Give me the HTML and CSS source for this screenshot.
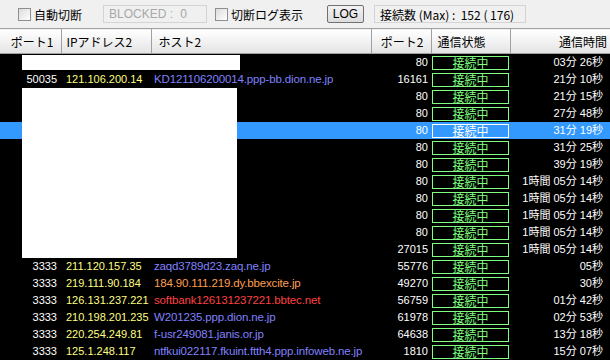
FILE: index.html
```html
<!DOCTYPE html>
<html lang="ja">
<head>
    <meta charset="UTF-8">
    <title>接続モニタ</title>
    <link rel="stylesheet" href="styles.css">
</head>
<body>
    <!-- Toolbar -->
    <div class="toolbar">
        <label class="check first"><span class="box"></span>自動切断</label>
        <div class="field blocked">BLOCKED :<span class="num">0</span></div>
        <label class="check"><span class="box"></span>切断ログ表示</label>
        <button class="log-btn">LOG</button>
        <div class="field count">接続数 (Max) :&nbsp; 152 ( 176)</div>
    </div>

    <!-- Connection list -->
    <div class="list">
        <table class="conn">
            <colgroup>
                <col class="c-port1">
                <col class="c-ip">
                <col class="c-host">
                <col class="c-port2">
                <col class="c-state">
                <col class="c-time">
            </colgroup>
            <thead>
                <tr>
                    <th class="r">ポート1</th>
                    <th class="l ip-h">IPアドレス2</th>
                    <th class="l host-h">ホスト2</th>
                    <th class="r">ポート2</th>
                    <th class="l state-h">通信状態</th>
                    <th class="r time-h">通信時間</th>
                </tr>
            </thead>
            <tbody>
                <tr><td class="p1"></td><td class="ip"></td><td class="host"></td><td class="p2">80</td><td><span class="state">接続中</span></td><td class="time">03分 26秒</td></tr>
                <tr><td class="p1">50035</td><td class="ip">121.106.200.14</td><td class="host">KD121106200014.ppp-bb.dion.ne.jp</td><td class="p2">16161</td><td><span class="state">接続中</span></td><td class="time">21分 10秒</td></tr>
                <tr><td class="p1"></td><td class="ip"></td><td class="host"></td><td class="p2">80</td><td><span class="state">接続中</span></td><td class="time">21分 15秒</td></tr>
                <tr><td class="p1"></td><td class="ip"></td><td class="host"></td><td class="p2">80</td><td><span class="state">接続中</span></td><td class="time">27分 48秒</td></tr>
                <tr class="selected"><td class="p1"></td><td class="ip"></td><td class="host"></td><td class="p2">80</td><td><span class="state">接続中</span></td><td class="time">31分 19秒</td></tr>
                <tr><td class="p1"></td><td class="ip"></td><td class="host"></td><td class="p2">80</td><td><span class="state">接続中</span></td><td class="time">31分 25秒</td></tr>
                <tr><td class="p1"></td><td class="ip"></td><td class="host"></td><td class="p2">80</td><td><span class="state">接続中</span></td><td class="time">39分 19秒</td></tr>
                <tr><td class="p1"></td><td class="ip"></td><td class="host"></td><td class="p2">80</td><td><span class="state">接続中</span></td><td class="time">1時間 05分 14秒</td></tr>
                <tr><td class="p1"></td><td class="ip"></td><td class="host"></td><td class="p2">80</td><td><span class="state">接続中</span></td><td class="time">1時間 05分 14秒</td></tr>
                <tr><td class="p1"></td><td class="ip"></td><td class="host"></td><td class="p2">80</td><td><span class="state">接続中</span></td><td class="time">1時間 05分 14秒</td></tr>
                <tr><td class="p1"></td><td class="ip"></td><td class="host"></td><td class="p2">80</td><td><span class="state">接続中</span></td><td class="time">1時間 05分 14秒</td></tr>
                <tr><td class="p1"></td><td class="ip"></td><td class="host"></td><td class="p2">27015</td><td><span class="state">接続中</span></td><td class="time">1時間 05分 14秒</td></tr>
                <tr><td class="p1">3333</td><td class="ip">211.120.157.35</td><td class="host">zaqd3789d23.zaq.ne.jp</td><td class="p2">55776</td><td><span class="state">接続中</span></td><td class="time">05秒</td></tr>
                <tr><td class="p1">3333</td><td class="ip">219.111.90.184</td><td class="host orange">184.90.111.219.dy.bbexcite.jp</td><td class="p2">49270</td><td><span class="state">接続中</span></td><td class="time">30秒</td></tr>
                <tr><td class="p1">3333</td><td class="ip">126.131.237.221</td><td class="host red">softbank126131237221.bbtec.net</td><td class="p2">56759</td><td><span class="state">接続中</span></td><td class="time">01分 42秒</td></tr>
                <tr><td class="p1">3333</td><td class="ip">210.198.201.235</td><td class="host">W201235.ppp.dion.ne.jp</td><td class="p2">61978</td><td><span class="state">接続中</span></td><td class="time">02分 53秒</td></tr>
                <tr><td class="p1">3333</td><td class="ip">220.254.249.81</td><td class="host">f-usr249081.janis.or.jp</td><td class="p2">64638</td><td><span class="state">接続中</span></td><td class="time">13分 18秒</td></tr>
                <tr><td class="p1">3333</td><td class="ip">125.1.248.117</td><td class="host">ntfkui022117.fkuint.ftth4.ppp.infoweb.ne.jp</td><td class="p2">1810</td><td><span class="state">接続中</span></td><td class="time">15分 07秒</td></tr>
            </tbody>
        </table>

        <!-- redacted areas -->
        <div class="mask mask-1"></div>
        <div class="mask mask-2"></div>
    </div>
</body>
</html>
```

FILE: styles.css
```css
body {
    margin: 0;
    padding: 0;
    width: 610px;
    height: 360px;
    overflow: hidden;
    background-color: #000;
    font-family: "Liberation Sans", "Noto Sans CJK JP", sans-serif;
    font-size: 12px;
}

/* Toolbar */
.toolbar {
    height: 28px;
    box-sizing: border-box;
    background-color: #f0f0f0;
    display: flex;
    align-items: center;
    color: #000;
}

.check {
    display: flex;
    align-items: center;
    gap: 3px;
    font-family: "Noto Sans CJK JP", sans-serif;
    font-size: 12px;
    margin-left: 8px;
}

.check.first {
    margin-left: 18px;
}

.box {
    width: 11px;
    height: 11px;
    border: 1px solid #8e8f8f;
    background: linear-gradient(135deg, #dcdcdc, #ffffff);
}

.field {
    height: 18px;
    box-sizing: border-box;
    border: 1px solid #d4d4d4;
    background-color: #f0f0f0;
    display: flex;
    align-items: center;
    padding: 0 5px;
}

.blocked {
    width: 104px;
    margin-left: 21px;
    color: #a8a8a8;
    font-size: 12px;
}

.blocked .num {
    margin-left: auto;
    margin-right: 14px;
}

.log-btn {
    width: 37px;
    height: 18px;
    margin-left: 24px;
    padding: 0;
    border: 1px solid #707070;
    border-radius: 2px;
    background: linear-gradient(#f2f2f2, #dddddd);
    font-family: "Liberation Sans", sans-serif;
    font-size: 12px;
    color: #000;
}

.count {
    width: 152px;
    margin-left: 10px;
    font-family: "Noto Sans CJK JP", sans-serif;
    font-size: 12px;
    color: #000;
}

/* List */
.list {
    position: relative;
}

.conn {
    width: 610px;
    table-layout: fixed;
    border-collapse: collapse;
    border-spacing: 0;
}

.c-port1 { width: 61px; }
.c-ip { width: 90px; }
.c-host { width: 220px; }
.c-port2 { width: 60px; }
.c-state { width: 79px; }
.c-time { width: 100px; }

.conn th {
    height: 24px;
    padding: 0 7px 0 5px;
    border-top: 1px solid #a0a0a0;
    border-bottom: 1px solid #a0a0a0;
    border-right: 1px solid #a0a0a0;
    background: linear-gradient(#ffffff, #f2f2f2 50%, #e3e3e3);
    font-family: "Noto Sans CJK JP", sans-serif;
    font-weight: normal;
    font-size: 12px;
    color: #000;
    white-space: nowrap;
}

.conn th:last-child {
    border-right: none;
    padding-right: 3px;
}

.conn th.l { text-align: left; }
.conn th.r { text-align: right; }
.conn th.host-h { padding-left: 7px; }
.conn th.state-h { padding-left: 6px; }

.conn td {
    height: 17px;
    padding: 0;
    line-height: 17px;
    font-size: 11px;
    white-space: nowrap;
    overflow: hidden;
    color: #fff;
}

.p1 {
    text-align: right;
    padding-right: 4px !important;
}

.ip {
    color: #ffff80 !important;
    padding-left: 5px !important;
}

.conn td.host {
    color: #8080ff;
    padding-left: 3px;
    font-size: 11.5px;
    letter-spacing: -0.15px;
}

.conn td.host.orange { color: #ff9f50; }
.conn td.host.red { color: #ff4040; }

.p2 {
    text-align: right;
    padding-right: 3px !important;
}

.state {
    display: block;
    height: 12px;
    margin: 1px 1px 0 1px;
    border: 1px solid #80ff80;
    line-height: 12px;
    text-align: center;
    font-family: "Noto Sans CJK JP", sans-serif;
    font-size: 12px;
    color: #80ff80;
}

.time {
    text-align: right;
    padding-right: 7px !important;
    font-family: "Liberation Sans", "Noto Sans CJK JP", sans-serif;
}

.selected td {
    background-color: #3399ff;
}

.selected .state {
    border-color: #fff;
    color: #fff;
}

/* redaction blocks laid over the list */
.mask {
    position: absolute;
    background-color: #fff;
}

.mask-1 {
    left: 22px;
    top: 27px;
    width: 218px;
    height: 15px;
}

.mask-2 {
    left: 22px;
    top: 60px;
    width: 215px;
    height: 170px;
}
```
